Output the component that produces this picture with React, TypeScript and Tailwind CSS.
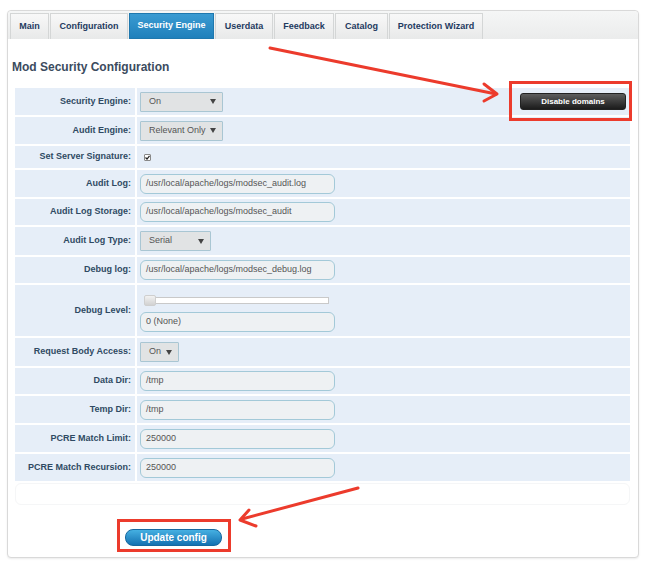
import React from "react";

const font = { fontFamily: '"Liberation Sans", Arial, sans-serif' };

function Caret() {
  return (
    <svg width="6" height="5" viewBox="0 0 6 5" className="shrink-0">
      <path d="M0 0 L6 0 L3 5 Z" fill="#444" />
    </svg>
  );
}

function Select({ value, w }: { value: string; w: string }) {
  return (
    <div
      className={`${w} h-[20px] flex items-center justify-between pl-[8px] pr-[6px] bg-[#e1e3e4] border border-[#a9c6d3] rounded-[1px] text-[9px] text-[#555]`}
    >
      <span>{value}</span>
      <Caret />
    </div>
  );
}

function Input({ value }: { value: string }) {
  return (
    <div className="w-[195px] h-[20px] flex items-center pl-[5px] bg-[#eef1f3] border border-[#a3c9d8] rounded-[6px] text-[9px] text-[#555]">
      {value}
    </div>
  );
}

type Row = { label: string; h: string; content: React.ReactNode; extra?: React.ReactNode };

export default function App() {
  const rows: Row[] = [
    {
      label: "Security Engine:",
      h: "h-[27px]",
      content: <Select value="On" w="w-[83px]" />,
      extra: (
        <div className="h-[17px] w-[106px] rounded-[3px] bg-gradient-to-b from-[#5e5e5e] to-[#1c1c1c] border border-[#222] flex items-center justify-center text-white font-bold text-[8px]">
          Disable domains
        </div>
      ),
    },
    { label: "Audit Engine:", h: "h-[27px]", content: <Select value="Relevant Only" w="w-[83px]" /> },
    {
      label: "Set Server Signature:",
      h: "h-[22px]",
      content: (
        <div className="ml-[4px] w-[7px] h-[7px] bg-white border border-[#888] rounded-[1px] flex items-center justify-center">
          <svg width="5" height="5" viewBox="0 0 5 5">
            <path d="M0.5 2.5 L2 4 L4.5 0.8" stroke="#222" strokeWidth="1.2" fill="none" />
          </svg>
        </div>
      ),
    },
    { label: "Audit Log:", h: "h-[27px]", content: <Input value="/usr/local/apache/logs/modsec_audit.log" /> },
    { label: "Audit Log Storage:", h: "h-[26px]", content: <Input value="/usr/local/apache/logs/modsec_audit" /> },
    { label: "Audit Log Type:", h: "h-[28px]", content: <Select value="Serial" w="w-[71px]" /> },
    { label: "Debug log:", h: "h-[26px]", content: <Input value="/usr/local/apache/logs/modsec_debug.log" /> },
    {
      label: "Debug Level:",
      h: "h-[51px]",
      content: (
        <div className="flex flex-col gap-[8px] self-start pt-[12px]">
          <div className="relative ml-[4px] w-[185px] h-[7px] bg-white border border-[#c9c9c9]">
            <div className="absolute left-[-1px] top-[-3px] w-[12px] h-[11px] rounded-[2px] bg-gradient-to-b from-[#f2f2f2] to-[#d2d2d2] border border-[#cfcfcf]" />
          </div>
          <Input value="0 (None)" />
        </div>
      ),
    },
    { label: "Request Body Access:", h: "h-[28px]", content: <Select value="On" w="w-[39px]" /> },
    { label: "Data Dir:", h: "h-[26px]", content: <Input value="/tmp" /> },
    { label: "Temp Dir:", h: "h-[27px]", content: <Input value="/tmp" /> },
    { label: "PCRE Match Limit:", h: "h-[27px]", content: <Input value="250000" /> },
    { label: "PCRE Match Recursion:", h: "h-[27px]", content: <Input value="250000" /> },
  ];

  const tabs = [
    { t: "Main", w: "w-[39px]" },
    { t: "Configuration", w: "w-[78px]" },
    { t: "Security Engine", w: "w-[85px]", active: true },
    { t: "Userdata", w: "w-[58px]" },
    { t: "Feedback", w: "w-[60px]" },
    { t: "Catalog", w: "w-[53px]" },
    { t: "Protection Wizard", w: "w-[94px]" },
  ];

  return (
    <div className="relative w-[650px] h-[566px] bg-white overflow-hidden" style={font}>
      <div className="ml-[7px] mt-[10px] w-[632px] h-[548px] border border-[#d9d9d9] rounded-[4px] bg-white shadow-[0_1px_2px_rgba(0,0,0,0.08)]">
        {/* tab bar */}
        <div className="h-[28px] pt-[2px] pl-[2px] flex gap-[1px] bg-gradient-to-b from-[#f5f6f6] to-[#ebecec] rounded-t-[4px]">
          {tabs.map((tab) => (
            <div
              key={tab.t}
              className={`${tab.w} h-[26px] flex items-center justify-center text-[9px] font-bold ${
                tab.active
                  ? "bg-gradient-to-b from-[#3a9bd2] to-[#1f80bb] text-white border border-[#1f78ae]"
                  : "bg-gradient-to-b from-[#f8f8f8] to-[#e8e9e9] text-[#1e3a5f] border-x border-t border-[#d4d6d6]"
              }`}
            >
              {tab.t}
            </div>
          ))}
        </div>

        {/* content */}
        <div className="pl-[4px] pr-[1px]">
          <h2 className="mt-[20px] h-[16px] leading-[16px] text-[12px] font-bold text-[#3b4b5e]">
            Mod Security Configuration
          </h2>
          <div className="mt-[13px] ml-[3px] w-[615px] flex flex-col gap-[2px]">
            {rows.map((r) => (
              <div key={r.label} className={`flex gap-[2px] ${r.h}`}>
                <div className="w-[120px] shrink-0 bg-[#e6eef8] flex items-center justify-end pr-[4px] text-[9px] font-bold text-[#2f4a63]">
                  {r.label}
                </div>
                <div className="flex-1 bg-[#e6eef8] flex items-center justify-between pl-[3px] pr-[4px]">
                  {r.content}
                  {r.extra}
                </div>
              </div>
            ))}
          </div>
          <div className="mt-[2px] ml-[3px] w-[615px] h-[22px] rounded-[6px] border border-[#f5f6f7]" />
          <div className="mt-[24px] ml-[113px] w-[97px] h-[17px] rounded-[8px] bg-gradient-to-b from-[#45b0e2] to-[#1372b2] border border-[#1668a0] flex items-center justify-center text-white font-bold text-[10px]">
            Update config
          </div>
        </div>
      </div>

      {/* annotations */}
      <div className="absolute left-[509px] top-[81px] w-[123px] h-[40px] border-[3px] border-[#ec3b2c]" />
      <div className="absolute left-[117px] top-[519px] w-[114px] h-[33px] border-[3px] border-[#ec3b2c]" />
      <svg className="absolute left-0 top-0 pointer-events-none" width="650" height="566">
        <g stroke="#ec3b2c" strokeWidth="3" fill="none" strokeLinecap="round" strokeLinejoin="round">
          <path d="M270 48 L496 94" />
          <path d="M484 84 L497 94 L484 101" />
          <path d="M358 488 L242 519" />
          <path d="M249 510 L240 520 L256 526" />
        </g>
      </svg>
    </div>
  );
}
